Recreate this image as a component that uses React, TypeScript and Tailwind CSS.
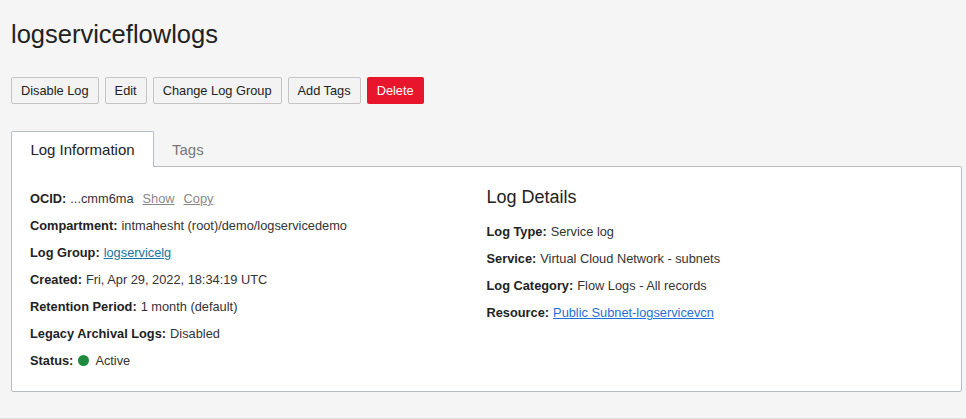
import React from "react";

// simple label/value row used in both columns
function Row({ label, children }: { label: string; children: React.ReactNode }) {
  return (
    <div className="h-[27px] flex items-center text-[12.8px] text-[#333]">
      <span className="font-bold text-[#222] mr-[4px]">{label}</span>
      {children}
    </div>
  );
}

const buttons = ["Disable Log", "Edit", "Change Log Group", "Add Tags"];

export default function App() {
  return (
    <div
      className="h-[419px] bg-[#f5f5f5] border-b border-[#dedede] text-[#222] overflow-hidden"
      style={{ fontFamily: '"Liberation Sans", Arial, sans-serif' }}
    >
      <div className="pl-[11px] pr-[4px]">
        {/* page title */}
        <h1 className="text-[25.5px] leading-[30px] pt-[19px] text-[#222] font-normal">logserviceflowlogs</h1>

        {/* action buttons */}
        <div className="flex gap-[6px] mt-[28px]">
          {buttons.map((b) => (
            <button
              key={b}
              className="h-[27px] px-[9px] text-[12.8px] text-[#222] bg-[#f3f3f3] border border-[#c5c5c5] rounded-[2px]"
            >
              {b}
            </button>
          ))}
          <button className="h-[27px] px-[10px] text-[12.8px] text-white bg-[#e8162d] rounded-[2px]">
            Delete
          </button>
        </div>

        {/* tabs */}
        <div className="flex mt-[27px] h-[35px] items-end">
          <div className="h-[36px] w-[143px] -mb-px relative z-10 bg-white border border-b-0 border-[#b7bdc6] rounded-t-[2px] flex items-center justify-center pt-[2px] text-[15px] text-[#222]">
            Log Information
          </div>
          <div className="h-[35px] px-[18px] pt-[3px] flex items-center text-[15px] text-[#777]">Tags</div>
        </div>

        {/* tab panel */}
        <div className="bg-white border border-[#b7bdc6] rounded-b-[2px] rounded-tr-[2px] grid grid-cols-2 px-[18px] pt-[18px] pb-[17px]">
          <div>
            <Row label="OCID:">
              <span>...cmm6ma</span>
              <span className="ml-[9px] text-[#888] underline">Show</span>
              <span className="ml-[9px] text-[#888] underline">Copy</span>
            </Row>
            <Row label="Compartment:">intmahesht (root)/demo/logservicedemo</Row>
            <Row label="Log Group:">
              <span className="text-[#17739f] underline">logservicelg</span>
            </Row>
            <Row label="Created:">Fri, Apr 29, 2022, 18:34:19 UTC</Row>
            <Row label="Retention Period:">1 month (default)</Row>
            <Row label="Legacy Archival Logs:">Disabled</Row>
            <Row label="Status:">
              <span className="inline-block w-[11px] h-[11px] rounded-full bg-[#1d8a3e] ml-[1px] mr-[6px]" />
              Active
            </Row>
          </div>
          <div>
            <h2 className="text-[18px] leading-[24px] h-[33px] text-[#222] font-normal">Log Details</h2>
            <Row label="Log Type:">Service log</Row>
            <Row label="Service:">Virtual Cloud Network - subnets</Row>
            <Row label="Log Category:">Flow Logs - All records</Row>
            <Row label="Resource:">
              <span className="text-[#1f6fd8] underline">Public Subnet-logservicevcn</span>
            </Row>
          </div>
        </div>
      </div>
    </div>
  );
}
